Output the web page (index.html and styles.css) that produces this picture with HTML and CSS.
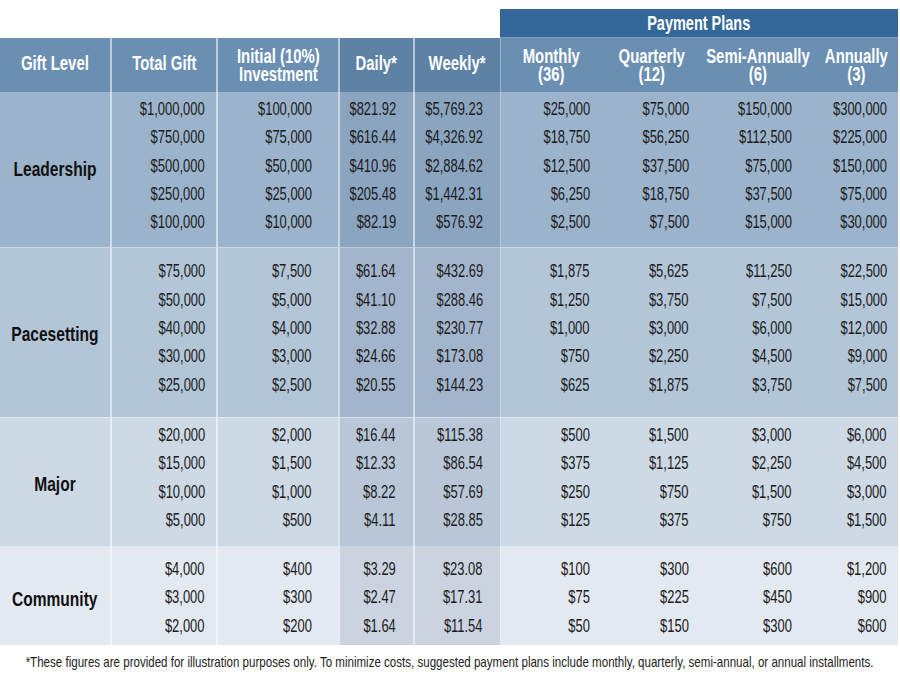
FILE: index.html
```html
<!DOCTYPE html>
<html lang="en">
<head>
<meta charset="utf-8">
<title>Gift Levels and Payment Plans</title>
<link rel="stylesheet" href="styles.css">
</head>
<body>
<div class="page">
  <div class="table">
    <div class="band"><span class="t">Payment Plans</span></div>

    <div class="row head">
      <div class="cell c1 one"><span class="t">Gift Level</span></div>
      <div class="cell c2 one"><span class="t">Total Gift</span></div>
      <div class="cell c3"><span class="t">Initial (10%)<br>Investment</span></div>
      <div class="cell c4 dw one"><span class="t">Daily*</span></div>
      <div class="cell c5 dw one"><span class="t">Weekly*</span></div>
      <div class="cell c6"><span class="t">Monthly<br>(36)</span></div>
      <div class="cell c7"><span class="t">Quarterly<br>(12)</span></div>
      <div class="cell c8"><span class="t">Semi-Annually<br>(6)</span></div>
      <div class="cell c9"><span class="t">Annually<br>(3)</span></div>
    </div>

    <div class="row grp g1">
      <div class="cell c1 label"><span class="t">Leadership</span></div>
      <div class="cell c2"><span class="t">$1,000,000<br>$750,000<br>$500,000<br>$250,000<br>$100,000</span></div>
      <div class="cell c3"><span class="t">$100,000<br>$75,000<br>$50,000<br>$25,000<br>$10,000</span></div>
      <div class="cell c4 dw"><span class="t">$821.92<br>$616.44<br>$410.96<br>$205.48<br>$82.19</span></div>
      <div class="cell c5 dw"><span class="t">$5,769.23<br>$4,326.92<br>$2,884.62<br>$1,442.31<br>$576.92</span></div>
      <div class="cell c6"><span class="t">$25,000<br>$18,750<br>$12,500<br>$6,250<br>$2,500</span></div>
      <div class="cell c7"><span class="t">$75,000<br>$56,250<br>$37,500<br>$18,750<br>$7,500</span></div>
      <div class="cell c8"><span class="t">$150,000<br>$112,500<br>$75,000<br>$37,500<br>$15,000</span></div>
      <div class="cell c9"><span class="t">$300,000<br>$225,000<br>$150,000<br>$75,000<br>$30,000</span></div>
    </div>

    <div class="row grp g2">
      <div class="cell c1 label"><span class="t">Pacesetting</span></div>
      <div class="cell c2"><span class="t">$75,000<br>$50,000<br>$40,000<br>$30,000<br>$25,000</span></div>
      <div class="cell c3"><span class="t">$7,500<br>$5,000<br>$4,000<br>$3,000<br>$2,500</span></div>
      <div class="cell c4 dw"><span class="t">$61.64<br>$41.10<br>$32.88<br>$24.66<br>$20.55</span></div>
      <div class="cell c5 dw"><span class="t">$432.69<br>$288.46<br>$230.77<br>$173.08<br>$144.23</span></div>
      <div class="cell c6"><span class="t">$1,875<br>$1,250<br>$1,000<br>$750<br>$625</span></div>
      <div class="cell c7"><span class="t">$5,625<br>$3,750<br>$3,000<br>$2,250<br>$1,875</span></div>
      <div class="cell c8"><span class="t">$11,250<br>$7,500<br>$6,000<br>$4,500<br>$3,750</span></div>
      <div class="cell c9"><span class="t">$22,500<br>$15,000<br>$12,000<br>$9,000<br>$7,500</span></div>
    </div>

    <div class="row grp g3">
      <div class="cell c1 label"><span class="t">Major</span></div>
      <div class="cell c2"><span class="t">$20,000<br>$15,000<br>$10,000<br>$5,000</span></div>
      <div class="cell c3"><span class="t">$2,000<br>$1,500<br>$1,000<br>$500</span></div>
      <div class="cell c4 dw"><span class="t">$16.44<br>$12.33<br>$8.22<br>$4.11</span></div>
      <div class="cell c5 dw"><span class="t">$115.38<br>$86.54<br>$57.69<br>$28.85</span></div>
      <div class="cell c6"><span class="t">$500<br>$375<br>$250<br>$125</span></div>
      <div class="cell c7"><span class="t">$1,500<br>$1,125<br>$750<br>$375</span></div>
      <div class="cell c8"><span class="t">$3,000<br>$2,250<br>$1,500<br>$750</span></div>
      <div class="cell c9"><span class="t">$6,000<br>$4,500<br>$3,000<br>$1,500</span></div>
    </div>

    <div class="row grp g4">
      <div class="cell c1 label"><span class="t">Community</span></div>
      <div class="cell c2"><span class="t">$4,000<br>$3,000<br>$2,000</span></div>
      <div class="cell c3"><span class="t">$400<br>$300<br>$200</span></div>
      <div class="cell c4 dw"><span class="t">$3.29<br>$2.47<br>$1.64</span></div>
      <div class="cell c5 dw"><span class="t">$23.08<br>$17.31<br>$11.54</span></div>
      <div class="cell c6"><span class="t">$100<br>$75<br>$50</span></div>
      <div class="cell c7"><span class="t">$300<br>$225<br>$150</span></div>
      <div class="cell c8"><span class="t">$600<br>$450<br>$300</span></div>
      <div class="cell c9"><span class="t">$1,200<br>$900<br>$600</span></div>
    </div>
  </div>
  <div class="note"><span class="t">*These figures are provided for illustration purposes only. To minimize costs, suggested payment plans include monthly, quarterly, semi-annual, or annual installments.</span></div>
</div>
</body>
</html>
```

FILE: styles.css
```css
html, body {
  margin: 0;
  padding: 0;
  background: #ffffff;
}

body {
  font-family: "Liberation Sans", Arial, sans-serif;
  color: #1b1b1b;
}

.page {
  width: 900px;
  padding-top: 9px;
}

/* condensed look: the reference uses a condensed face */
.t {
  display: inline-block;
  white-space: nowrap;
  transform: scaleX(0.72);
  transform-origin: center center;
}

.table {
  display: grid;
  grid-template-columns: 110px 106px 122px 75px 87px 102px 100px 112px 84px;
  width: 898px;
}

.row {
  display: contents;
}

.band {
  grid-column: 6 / 10;
  height: 28px;
  background: #35689a;
  color: #ffffff;
  font-weight: bold;
  font-size: 21px;
  line-height: 28px;
  text-align: center;
  border-bottom: 1px solid #7b9dbd;
}

.band .t {
  transform: scaleX(0.69);
}

.cell {
  box-sizing: border-box;
}

.c2, .c3, .c4, .c5 {
  border-left: 2px solid rgba(255, 255, 255, 0.55);
}

.c6 {
  border-left: 1px solid rgba(255, 255, 255, 0.3);
}

/* header row */
.head > .cell {
  height: 54px;
  background: #6a8fb3;
  color: #ffffff;
  font-weight: bold;
  font-size: 21px;
  line-height: 18px;
  text-align: center;
  display: flex;
  align-items: center;
  justify-content: center;
}

.head > .one {
  padding-bottom: 4px;
}

.head .t {
  transform: scaleX(0.71);
}

.head > .dw {
  background: #5e81a6;
}

/* body groups */
.grp > .cell {
  display: flex;
  justify-content: flex-end;
  align-items: flex-start;
  font-size: 17.5px;
  line-height: 28.3px;
  text-align: right;
}

.grp > .cell .t {
  transform: scaleX(0.74);
  transform-origin: right center;
}

.grp > .c2 { padding-right: 11px; }
.grp > .c3 { padding-right: 26px; }
.grp > .c4 { padding-right: 17px; }
.grp > .c5 { padding-right: 17px; }
.grp > .c6 { padding-right: 12px; }
.grp > .c7 { padding-right: 13px; }
.grp > .c8 { padding-right: 22px; }
.grp > .c9 { padding-right: 11px; }

.grp > .label {
  align-items: center;
  justify-content: center;
  font-weight: bold;
  font-size: 21px;
  color: #111111;
}

.grp > .label .t {
  transform: scaleX(0.74);
  transform-origin: center center;
}

.g1 > .cell { background: #9bb4cb; padding-top: 3px; padding-bottom: 11px; }
.g1 > .dw { background: #8ba4c0; }
.g1 > .label { padding-top: 7px; padding-bottom: 8px; }

.g2 > .cell { background: #b3c6d8; padding-top: 9px; padding-bottom: 18px; border-top: 1px solid rgba(255, 255, 255, 0.3); }
.g2 > .dw { background: #a3b5cc; }
.g2 > .label { padding-top: 10px; padding-bottom: 8px; }

.g3 > .cell { background: #cdd9e5; padding-top: 3px; padding-bottom: 12px; border-top: 1px solid rgba(255, 255, 255, 0.5); }
.g3 > .dw { background: #b8c6d7; }
.g3 > .label { padding-top: 16px; padding-bottom: 12px; }

.g4 > .cell { background: #e3e9f0; padding-top: 9px; padding-bottom: 5px; }
.g4 > .dw { background: #cbd3e0; }
.g4 > .label { padding-top: 13px; padding-bottom: 5px; }

.note {
  display: flex;
  justify-content: center;
  margin-top: 7px;
  font-size: 15px;
  line-height: 20px;
  color: #222222;
}

.note .t {
  transform: scaleX(0.77);
}
```
